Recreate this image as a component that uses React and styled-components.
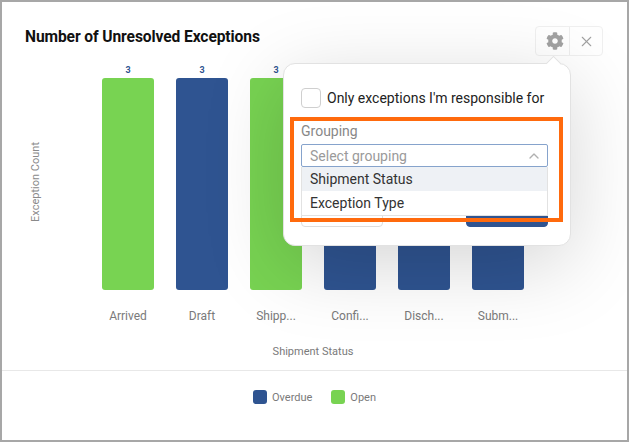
import React from 'react';
import styled, { createGlobalStyle } from 'styled-components';
import { FaCog } from 'react-icons/fa';
import { X, ChevronUp } from 'lucide-react';

const GlobalStyle = createGlobalStyle`
  body {
    margin: 0;
    background: #fff;
    font-family: Roboto, "Liberation Sans", sans-serif;
  }
`;

const COLORS = {
  overdue: '#2f5491',
  open: '#78d352',
};

const bars = [
  { label: 'Arrived', value: 3, status: 'open' },
  { label: 'Draft', value: 3, status: 'overdue' },
  { label: 'Shipp...', value: 3, status: 'open' },
  { label: 'Confi...', value: 3, status: 'overdue' },
  { label: 'Disch...', value: 3, status: 'overdue' },
  { label: 'Subm...', value: 3, status: 'overdue' },
];

const Frame = styled.div`
  width: 629px;
  height: 442px;
  box-sizing: border-box;
  border: 2px solid #a7a7a7;
  background: #fff;
  position: relative;
  overflow: hidden;
`;

const Card = styled.div`
  display: flex;
  flex-direction: column;
  height: 100%;
`;

const Title = styled.h2`
  margin: 0;
  padding: 26px 0 0 23px;
  font-size: 15.6px;
  line-height: 18px;
  font-weight: 700;
  color: #111;
  letter-spacing: -0.1px;
`;

const ChartRow = styled.div`
  display: flex;
  margin-top: 19px;
`;

const YAxis = styled.div`
  width: 66px;
  height: 225px;
  display: flex;
  align-items: center;
  justify-content: center;
  margin-right: 34px;
`;

const YLabel = styled.span`
  writing-mode: vertical-rl;
  transform: rotate(180deg);
  font-size: 11px;
  color: #8a8a8a;
  margin-top: 8px;
`;

const PlotArea = styled.div`
  display: flex;
  flex-direction: column;
  align-items: center;
`;

const Bars = styled.div`
  display: flex;
  gap: 22px;
`;

const BarColumn = styled.div`
  width: 52px;
  display: flex;
  flex-direction: column;
  align-items: center;
`;

const BarValue = styled.span`
  font-size: 9px;
  line-height: 10px;
  font-weight: 700;
  color: ${COLORS.overdue};
  margin-bottom: 3px;
`;

const Bar = styled.div`
  width: 52px;
  height: 212px;
  border-radius: 3px;
  background: ${(p) => COLORS[p.$status]};
`;

const XLabel = styled.span`
  margin-top: 18px;
  font-size: 12px;
  line-height: 16px;
  color: #7a7a7a;
  white-space: nowrap;
`;

const AxisTitle = styled.div`
  margin-top: 20px;
  font-size: 11px;
  line-height: 16px;
  color: #7a7a7a;
`;

const Divider = styled.hr`
  margin: 10px 0 0;
  border: none;
  border-top: 1px solid #e8e8e8;
`;

const Legend = styled.div`
  display: flex;
  justify-content: center;
  gap: 19px;
  margin-top: 19px;
`;

const LegendItem = styled.div`
  display: flex;
  align-items: center;
  gap: 5px;
  font-size: 11px;
  color: #7a7a7a;
`;

const Swatch = styled.span`
  width: 14px;
  height: 14px;
  border-radius: 3px;
  background: ${(p) => COLORS[p.$status]};
`;

const Toolbar = styled.div`
  position: absolute;
  top: 24px;
  left: 533px;
  display: flex;
  border: 1px solid #f0f0f0;
  border-radius: 4px;
  background: #fff;
`;

const ToolButton = styled.button`
  width: 33px;
  height: 28px;
  display: flex;
  align-items: center;
  justify-content: center;
  border: none;
  background: transparent;
  padding: 0 0 0 ${(p) => (p.$shift ? '4px' : '0')};
  color: #a2a2a2;
  & + & {
    border-left: 1px solid #eeeeee;
  }
`;

const Popover = styled.div`
  position: absolute;
  top: 61px;
  left: 281px;
  width: 288px;
  box-sizing: border-box;
  padding: 24px 22px 18px 17px;
  background: #fff;
  border: 1px solid #e2e2e2;
  border-radius: 12px;
  box-shadow: 0 18px 80px rgba(0, 0, 0, 0.17);

  &::before {
    content: '';
    position: absolute;
    top: -6px;
    left: 264px;
    width: 10px;
    height: 10px;
    background: #fff;
    border-left: 1px solid #e2e2e2;
    border-top: 1px solid #e2e2e2;
    transform: rotate(45deg);
  }
`;

const CheckRow = styled.label`
  display: flex;
  align-items: center;
  gap: 6px;
  font-size: 14px;
  color: #222;
`;

const Checkbox = styled.span`
  width: 18px;
  height: 18px;
  border: 1px solid #cfcfcf;
  border-radius: 4px;
  background: #fff;
`;

const FieldLabel = styled.div`
  margin-top: 15px;
  font-size: 14px;
  line-height: 16px;
  color: #888;
`;

const SelectWrap = styled.div`
  position: relative;
  margin-top: 5px;
`;

const SelectBox = styled.div`
  height: 23px;
  box-sizing: border-box;
  display: flex;
  align-items: center;
  justify-content: space-between;
  padding: 0 5px 0 8px;
  border: 1px solid #86a3cc;
  border-radius: 2px;
  font-size: 14px;
  color: #9a9a9a;
`;

const Menu = styled.ul`
  position: absolute;
  top: 23px;
  left: 0;
  right: 0;
  margin: 0;
  padding: 0;
  list-style: none;
  background: #fff;
  border: 1px solid #e2e2e2;
  border-top: none;
  z-index: 2;
`;

const Option = styled.li`
  height: 24px;
  display: flex;
  align-items: center;
  padding-left: 8px;
  font-size: 14px;
  color: #333;
  background: ${(p) => (p.$active ? '#eef1f5' : '#fff')};
`;

const Actions = styled.div`
  display: flex;
  justify-content: space-between;
  margin-top: 32px;
`;

const ActionButton = styled.button`
  width: 82px;
  height: 28px;
  padding: 0 0 9px;
  border-radius: 4px;
  border: 1px solid ${(p) => (p.$primary ? COLORS.overdue : '#dddddd')};
  background: ${(p) => (p.$primary ? COLORS.overdue : '#fff')};
  color: ${(p) => (p.$primary ? '#fff' : '#333')};
  font-family: Roboto, "Liberation Sans", sans-serif;
  font-size: 13px;
`;

const Highlight = styled.div`
  position: absolute;
  top: 53px;
  left: 6px;
  width: 273px;
  height: 105px;
  box-sizing: border-box;
  border: 4px solid #ff6a0d;
  pointer-events: none;
  z-index: 3;
`;

export default function App() {
  return (
    <>
      <GlobalStyle />
      <Frame>
        <Card>
          <Title>Number of Unresolved Exceptions</Title>
          <ChartRow>
            <YAxis>
              <YLabel>Exception Count</YLabel>
            </YAxis>
            <PlotArea>
              <Bars>
                {bars.map((b) => (
                  <BarColumn key={b.label}>
                    <BarValue>{b.value}</BarValue>
                    <Bar $status={b.status} />
                    <XLabel>{b.label}</XLabel>
                  </BarColumn>
                ))}
              </Bars>
              <AxisTitle>Shipment Status</AxisTitle>
            </PlotArea>
          </ChartRow>
          <Divider />
          <Legend>
            <LegendItem>
              <Swatch $status="overdue" />
              Overdue
            </LegendItem>
            <LegendItem>
              <Swatch $status="open" />
              Open
            </LegendItem>
          </Legend>
        </Card>

        <Toolbar>
          <ToolButton aria-label="Settings" $shift>
            <FaCog size={18} />
          </ToolButton>
          <ToolButton aria-label="Close">
            <X size={17} strokeWidth={1.5} />
          </ToolButton>
        </Toolbar>

        <Popover>
          <CheckRow>
            <Checkbox />
            Only exceptions I'm responsible for
          </CheckRow>
          <FieldLabel>Grouping</FieldLabel>
          <SelectWrap>
            <SelectBox>
              Select grouping
              <ChevronUp size={16} color="#b0b0b0" strokeWidth={2} />
            </SelectBox>
            <Menu>
              <Option $active>Shipment Status</Option>
              <Option>Exception Type</Option>
            </Menu>
          </SelectWrap>
          <Actions>
            <ActionButton>Cancel</ActionButton>
            <ActionButton $primary>Apply</ActionButton>
          </Actions>
          <Highlight />
        </Popover>
      </Frame>
    </>
  );
}
